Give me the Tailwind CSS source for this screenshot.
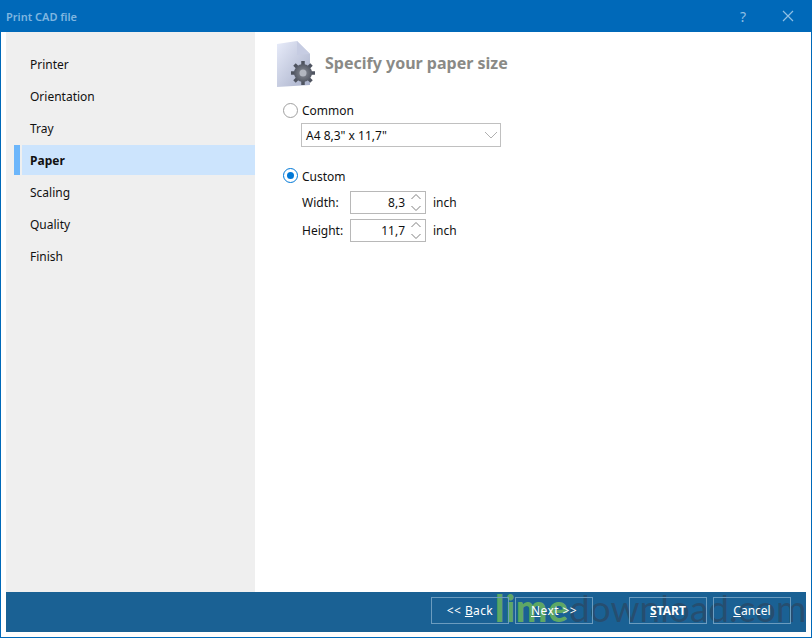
<!DOCTYPE html>
<html lang="en">
<head>
    <meta charset="UTF-8">
    <title>Print CAD file</title>
    <script src="https://cdn.jsdelivr.net/npm/@tailwindcss/browser@4"></script>
</head>
<body class="bg-white">
    <div class="relative w-[812px] h-[638px] flex flex-col border border-[#0069b9] border-t-0 overflow-hidden font-['Noto_Sans',sans-serif] text-[12px] text-[#111]">
        <!-- Title bar -->
        <header class="h-[32px] -mx-px bg-[#0069b9] flex items-center pl-[6px] shrink-0">
            <h1 class="flex-1 pt-[2px] text-[11px] font-semibold text-[#7fb6e0]">Print CAD file</h1>
            <span class="w-[16px] text-center text-[14px] text-[#8fbfe4] mr-[31px]">?</span>
            <svg class="w-[12px] h-[12px] mr-[18px]" viewBox="0 0 12 12" fill="none" stroke="#8fbfe4" stroke-width="1.2"><path d="M1 1l10 10M11 1L1 11"/></svg>
        </header>

        <div class="flex-1 flex flex-col pl-[5px] pr-[5px] pb-[5px]">
            <div class="flex-1 flex">
                <!-- Sidebar -->
                <nav class="w-[249px] bg-[#efefef] pt-[17px] pl-[8px] flex flex-col gap-[2px]">
                    <a class="h-[30px] pl-[16px] pt-[2px] flex items-center">Printer</a>
                    <a class="h-[30px] pl-[16px] pt-[2px] flex items-center">Orientation</a>
                    <a class="h-[30px] pl-[16px] pt-[2px] flex items-center">Tray</a>
                    <a class="h-[30px] flex items-center font-bold">
                        <span class="w-[6px] h-full bg-[#6cb6fb]"></span>
                        <span class="ml-[2px] flex-1 h-full bg-[#cce4fd] pl-[8px] pt-[2px] flex items-center">Paper</span>
                    </a>
                    <a class="h-[30px] pl-[16px] pt-[2px] flex items-center">Scaling</a>
                    <a class="h-[30px] pl-[16px] pt-[2px] flex items-center">Quality</a>
                    <a class="h-[30px] pl-[16px] pt-[2px] flex items-center">Finish</a>
                </nav>

                <!-- Main content -->
                <main class="flex-1 bg-white pl-[21px] pt-[8px]">
                    <div class="flex items-center h-[49px]">
                        <svg class="w-[40px] h-[49px]" viewBox="0 0 40 49">
                            <defs>
                                <linearGradient id="pg" x1="0" y1="0" x2="1" y2="1"><stop offset="0" stop-color="#e8ecfa"/><stop offset="1" stop-color="#a6aec8"/></linearGradient>
                                <radialGradient id="gear"><stop offset="0" stop-color="#8b8f99"/><stop offset="1" stop-color="#555a66"/></radialGradient>
                            </defs>
                            <path d="M1 4l20-3 13 13v31L1 47z" fill="url(#pg)"/>
                            <path d="M21 1l13 13-13 1z" fill="#c6cce2"/>
                            <path d="M27 21v24M15 33h24M18.500 24.500l17 17M35.500 24.500l-17 17" stroke="#4f5460" stroke-width="3.500"/>
                            <circle cx="27" cy="33" r="9" fill="url(#gear)"/>
                            <circle cx="27" cy="33" r="3.500" fill="#b2b6c0"/>
                        </svg>
                        <h2 class="ml-[9px] -mt-[4px] text-[16px] font-bold text-[#8a8a86]">Specify your paper size</h2>
                    </div>

                    <label class="mt-[13px] ml-[7px] h-[18px] flex items-center gap-[4px]">
                        <span class="w-[15px] h-[15px] mb-[2px] rounded-full border border-[#a0a0a0] bg-white"></span>
                        <span>Common</span>
                    </label>
                    <div class="mt-[3px] ml-[25px] w-[200px] h-[24px] border border-[#c0c0c0] flex items-center pl-[4px] pr-[2px]">
                        <span class="flex-1 pt-[2px]">A4 8,3" x 11,7"</span>
                        <svg class="w-[14px] h-[8px]" viewBox="0 0 14 8" fill="none" stroke="#b0b0b0"><path d="M1 1l6 6 6-6"/></svg>
                    </div>

                    <label class="mt-[21px] ml-[7px] h-[18px] flex items-center gap-[4px]">
                        <span class="w-[15px] h-[15px] mb-[3px] rounded-full border border-[#0078d7] bg-white flex items-center justify-center">
                            <span class="w-[7px] h-[7px] rounded-full bg-[#0078d7]"></span>
                        </span>
                        <span>Custom</span>
                    </label>

                    <div class="mt-[5px] ml-[26px] flex items-center h-[23px]">
                        <span class="w-[48px]">Width:</span>
                        <div class="w-[76px] h-full border border-[#b8b8b8] flex items-center">
                            <span class="flex-1 text-right pr-[5px]">8,3</span>
                            <svg class="w-[12px] h-[21px] mr-[3px]" viewBox="0 0 12 21" fill="none" stroke="#808080"><path d="M1.500 7l4.500-4.500L10.500 7M1.500 14l4.500 4.500L10.500 14"/></svg>
                        </div>
                        <span class="ml-[7px]">inch</span>
                    </div>
                    <div class="mt-[5px] ml-[26px] flex items-center h-[23px]">
                        <span class="w-[48px]">Height:</span>
                        <div class="w-[76px] h-full border border-[#b8b8b8] flex items-center">
                            <span class="flex-1 text-right pr-[5px]">11,7</span>
                            <svg class="w-[12px] h-[21px] mr-[3px]" viewBox="0 0 12 21" fill="none" stroke="#808080"><path d="M1.500 7l4.500-4.500L10.500 7M1.500 14l4.500 4.500L10.500 14"/></svg>
                        </div>
                        <span class="ml-[7px]">inch</span>
                    </div>
                </main>
            </div>

            <!-- Footer buttons -->
            <footer class="h-[40px] shrink-0 bg-[#1a6194] flex items-center pl-[425px] pb-[3px] text-white">
                <button class="relative z-10 w-[78px] h-[27px] border border-[#6b9cbf] flex items-center justify-center tracking-[0.4px]">&lt;&lt;&nbsp;<u>B</u>ack</button>
                <button class="relative z-10 ml-[6px] w-[78px] h-[27px] border border-[#6b9cbf] flex items-center justify-center tracking-[0.4px]"><u>N</u>ext &gt;&gt;</button>
                <button class="relative z-10 ml-[36px] w-[78px] h-[27px] border border-[#6b9cbf] flex items-center justify-center font-bold"><u>S</u>TART</button>
                <button class="relative z-10 ml-[6px] w-[78px] h-[27px] border border-[#6b9cbf] flex items-center justify-center"><u>C</u>ancel</button>
            </footer>
        </div>

        <!-- Watermark over the footer -->
        <div class="absolute left-[494px] top-[586px] text-[37px] leading-[44px] font-['Lato',sans-serif] whitespace-nowrap pointer-events-none"><span class="font-black tracking-[1px] text-[#7ec850]/70">lime</span><span class="text-[#2c4660]/70">download.com</span></div>
    </div>
</body>
</html>
